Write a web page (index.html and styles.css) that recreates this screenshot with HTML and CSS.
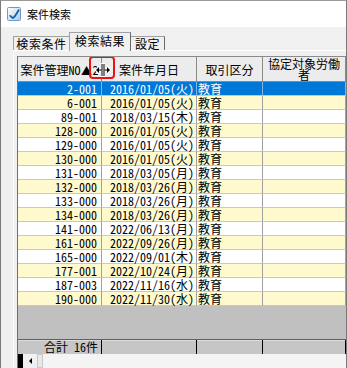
FILE: index.html
```html
<!DOCTYPE html>
<html lang="ja">
<head>
<meta charset="utf-8">
<link rel="stylesheet" href="styles.css">
</head>
<body>
<div class="window">
  <div class="titlebar">
    <svg class="appicon" width="14" height="14" viewBox="0 0 14 14">
      <defs>
        <linearGradient id="ig" x1="0" y1="0" x2="1" y2="1">
          <stop offset="0" stop-color="#ffffff"/>
          <stop offset="1" stop-color="#a9cbe8"/>
        </linearGradient>
      </defs>
      <rect x="0.5" y="0.5" width="13" height="13" rx="1" fill="url(#ig)" stroke="#6b9ccc"/>
      <path d="M2.5 9 C4 8.5 4.5 11 6 11 C8 10 10 6 12 2.5" fill="none" stroke="#1f5fa8" stroke-width="1.8"/>
    </svg>
    <span class="title">案件検索</span>
  </div>
  <div class="tabs">
    <div class="tab t1">検索条件</div>
    <div class="tab t2 active">検索結果</div>
    <div class="tab t3">設定</div>
  </div>
  <div class="panel">
    <div class="grid">
      <div class="row head">
        <div class="c c1">案件管理NO<span class="fw">▲</span>2</div>
        <div class="c c2">案件年月日</div>
        <div class="c c3">取引区分</div>
        <div class="c c4 two">協定対象労働<br>者</div>
      </div>
      <div class="row sel"><div class="c c1">2-001</div><div class="c c2">2016/01/05(火)</div><div class="c c3">教育</div><div class="c c4"></div></div>
      <div class="row y"><div class="c c1">6-001</div><div class="c c2">2016/01/05(火)</div><div class="c c3">教育</div><div class="c c4"></div></div>
      <div class="row"><div class="c c1">89-001</div><div class="c c2">2018/03/15(木)</div><div class="c c3">教育</div><div class="c c4"></div></div>
      <div class="row y"><div class="c c1">128-000</div><div class="c c2">2016/01/05(火)</div><div class="c c3">教育</div><div class="c c4"></div></div>
      <div class="row"><div class="c c1">129-000</div><div class="c c2">2016/01/05(火)</div><div class="c c3">教育</div><div class="c c4"></div></div>
      <div class="row y"><div class="c c1">130-000</div><div class="c c2">2016/01/05(火)</div><div class="c c3">教育</div><div class="c c4"></div></div>
      <div class="row"><div class="c c1">131-000</div><div class="c c2">2018/03/05(月)</div><div class="c c3">教育</div><div class="c c4"></div></div>
      <div class="row y"><div class="c c1">132-000</div><div class="c c2">2018/03/26(月)</div><div class="c c3">教育</div><div class="c c4"></div></div>
      <div class="row"><div class="c c1">133-000</div><div class="c c2">2018/03/26(月)</div><div class="c c3">教育</div><div class="c c4"></div></div>
      <div class="row y"><div class="c c1">134-000</div><div class="c c2">2018/03/26(月)</div><div class="c c3">教育</div><div class="c c4"></div></div>
      <div class="row"><div class="c c1">141-000</div><div class="c c2">2022/06/13(月)</div><div class="c c3">教育</div><div class="c c4"></div></div>
      <div class="row y"><div class="c c1">161-000</div><div class="c c2">2022/09/26(月)</div><div class="c c3">教育</div><div class="c c4"></div></div>
      <div class="row"><div class="c c1">165-000</div><div class="c c2">2022/09/01(木)</div><div class="c c3">教育</div><div class="c c4"></div></div>
      <div class="row y"><div class="c c1">177-001</div><div class="c c2">2022/10/24(月)</div><div class="c c3">教育</div><div class="c c4"></div></div>
      <div class="row"><div class="c c1">187-003</div><div class="c c2">2022/11/16(水)</div><div class="c c3">教育</div><div class="c c4"></div></div>
      <div class="row y"><div class="c c1">190-000</div><div class="c c2">2022/11/30(水)</div><div class="c c3">教育</div><div class="c c4"></div></div>
      <div class="filler"></div>
      <div class="row foot">
        <div class="c c1">合計 16件</div>
        <div class="c c2"></div>
        <div class="c c3"></div>
        <div class="c c4"></div>
      </div>
      <div class="hscroll">
        <div class="hs-block"></div>
        <div class="hs-btn"><span class="hs-arrow"></span></div>
        <div class="hs-thumb"></div>
        <div class="hs-track"></div>
      </div>
      <div class="highlight"></div>
      <svg class="cursor" width="18" height="16" viewBox="0 0 18 16">
        <path d="M7 1 H11 V6 H13 V3 L17.5 8 L13 13 V10 H11 V15 H7 V10 H5 V13 L0.5 8 L5 3 V6 H7 Z" fill="#fff"/>
        <path d="M8 2 V14 M10 2 V14" stroke="#000" stroke-width="1"/>
        <path d="M2 8 L5 5 V11 Z M16 8 L13 5 V11 Z M5 7.5 H7.5 V8.5 H5 Z M10.5 7.5 H13 V8.5 H10.5 Z" fill="#000"/>
      </svg>
    </div>
  </div>
</div>
</body>
</html>
```
FILE: styles.css
```css
html, body {
  margin: 0;
  padding: 0;
  background: #ffffff;
}
body {
  font-family: "Noto Sans CJK JP", sans-serif;
  font-size: 12px;
  color: #000;
  font-feature-settings: "hwid" 1;
}
.window {
  width: 345px;
  height: 367px;
  border-left: 1px solid #7a7a7a;
  border-top: 1px solid #9a9a9a;
  border-right: 1px solid #7a7a7a;
  background: #f0f0f0;
  display: flex;
  flex-direction: column;
  overflow: hidden;
}
.titlebar {
  height: 26px;
  background: #ffffff;
  display: flex;
  align-items: center;
  padding-left: 6px;
  gap: 6px;
  flex: none;
}
.title {
  font-size: 11px;
  line-height: 12px;
}
.tabs {
  height: 23px;
  display: flex;
  align-items: flex-end;
  padding-left: 12px;
  flex: none;
}
.tab {
  box-sizing: border-box;
  height: 14px;
  border-top: 1px solid #a0a0a0;
  border-left: 1px solid #a0a0a0;
  line-height: 13px;
  font-size: 12px;
  letter-spacing: 0.6px;
  text-align: center;
}
.t1 { width: 56px; }
.t2 {
  width: 62px;
  height: 19px;
  line-height: 16px;
  border-right: 1px solid #6a6a6a;
  margin-bottom: -1px;
  background: #f0f0f0;
  position: relative;
}
.t3 {
  width: 34px;
  border-left: none;
  border-right: 1px solid #6a6a6a;
}
.panel {
  flex: 1;
  margin-left: 12px;
  border-top: 1px solid #ffffff;
  border-left: 1px solid #ffffff;
  padding: 5px 0 0 3px;
  display: flex;
  min-height: 0;
}
.grid {
  position: relative;
  flex: 1;
  border-left: 1px solid #707070;
  border-top: 1px solid #8a8a8a;
  background: #c0c0c0;
  display: flex;
  flex-direction: column;
  overflow: hidden;
  height: 311px;
}
.row {
  display: flex;
  height: 14px;
  flex: none;
  background: #ffffff;
}
.c {
  box-sizing: border-box;
  height: 100%;
  border-right: 1px solid #a0a0a0;
  border-bottom: 1px solid #c8c8c8;
  line-height: 13px;
  white-space: nowrap;
  flex: none;
}
.c1 { width: 84px; text-align: right; padding-right: 4px; }
.c2 { width: 95px; padding-left: 8px; }
.c3 { width: 66px; padding-left: 1px; }
.c4 { width: 83px; }
.fw {
  display: inline-block;
  width: 12px;
  text-align: center;
  font-size: 11px;
  font-feature-settings: "fwid" 1;
}
.row.y { background: #fffacd; }
.row.sel { background: #0078d7; color: #ffffff; }
.row.sel .c { border-right-color: #7fb4e6; }
.row.head {
  height: 25px;
  background: #ececec;
}
.row.head .c {
  border-right: 1px solid #8a8a8a;
  border-bottom: 1px solid #8a8a8a;
  text-align: center;
  line-height: 25px;
  padding: 0;
}
.row.head .c.two {
  line-height: 11px;
  padding-top: 1px;
}
.filler {
  flex: 1;
}
.row.foot {
  height: 14px;
  background: #c6c6c6;
  border-top: 1px solid #606060;
  box-shadow: inset 0 1px 0 #dcdcdc;
}
.row.foot .c {
  border-right: 1px solid #000000;
  border-bottom: none;
  line-height: 14px;
}
.row.foot .c1 { padding-right: 3px; }
.hscroll {
  height: 14px;
  display: flex;
  background: #f0f0f0;
  flex: none;
}
.hs-block {
  width: 5px;
  background: #000;
}
.hs-btn {
  width: 14px;
  display: flex;
  align-items: center;
  justify-content: center;
  background: #f0f0f0;
}
.hs-arrow {
  width: 0;
  height: 0;
  border-top: 3px solid transparent;
  border-bottom: 3px solid transparent;
  border-right: 3px solid #000;
}
.hs-thumb {
  width: 6px;
  background: #e8e8e8;
  border: 1px solid #c8c8c8;
  box-sizing: border-box;
}
.hs-track {
  flex: 1;
  background: #f4f4f4;
}
.highlight {
  position: absolute;
  left: 71px;
  top: -1px;
  width: 22px;
  height: 19px;
  border: 2px solid #e81414;
  border-radius: 4px;
}
.cursor {
  position: absolute;
  left: 76px;
  top: 5px;
}
```
